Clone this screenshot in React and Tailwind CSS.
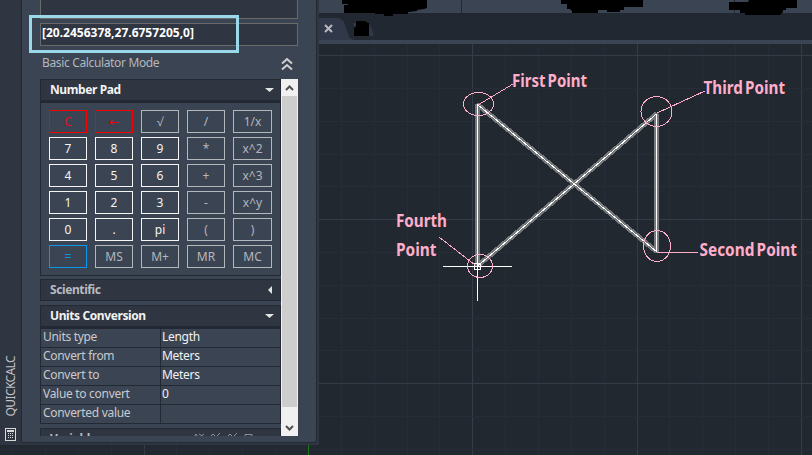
import React from "react";

const KEYS = [
  ["C", "←", "√", "/", "1/x"],
  ["7", "8", "9", "*", "x^2"],
  ["4", "5", "6", "+", "x^3"],
  ["1", "2", "3", "-", "x^y"],
  ["0", ".", "pi", "(", ")"],
  ["=", "MS", "M+", "MR", "MC"],
];

function tone(key) {
  if (key === "←") return "border-[#f60000] text-[#f60000] font-['DejaVu_Sans']";
  if (key === "C") return "border-[#f60000] text-[#e01020]";
  if (key === "=") return "border-[#0a96ea] text-[#0a96ea]";
  if (/^([0-9.]|pi)$/.test(key)) return "border-[#f5f5f5] text-[#f5f5f5]";
  return "border-[#b4b7bc] text-[#b4b7bc]";
}

const UNITS = [
  ["Units type", "Length"],
  ["Convert from", "Meters"],
  ["Convert to", "Meters"],
  ["Value to convert", "0"],
  ["Converted value", ""],
];

function Header({ title, open = true, className = "" }) {
  return (
    <div className={"flex shrink-0 items-center justify-between border border-[#222933] bg-[#2f3541] pl-[9px] pr-[6px] font-bold " + className}>
      <span className="tracking-[-0.4px]">{title}</span>
      <svg className="mb-px" width="9" height="9" viewBox="0 0 9 9" fill="#e4e4e4">
        {open ? <path d="M0 3h9L4.5 7z" /> : <path d="M7 1v8L3 5z" />}
      </svg>
    </div>
  );
}

function Palette() {
  return (
    <div className="flex h-[445px] w-[319px] shrink-0 bg-[#2f3541] pb-[3px] pr-[3px]">
      <div className="flex w-[22px] shrink-0 flex-col items-center justify-end border-r border-[#222933]">
        <span className="rotate-180 text-[12px] leading-[14px] tracking-[-0.6px] text-[#c0c2c6] [writing-mode:vertical-rl]">QUICKCALC</span>
        <svg className="mt-[12px]" width="11" height="13" viewBox="0 0 11 13">
          <rect x=".5" y=".5" width="10" height="12" fill="#2f3541" stroke="#d8d8d8" />
          <rect x="2" y="2" width="7" height="2" fill="#d8d8d8" />
          <g fill="#d8d8d8" shapeRendering="crispEdges">
            {[5, 7, 9].map((y) => [3, 5, 7].map((x) => <rect key={x + "-" + y} x={x} y={y} width="1" height="1" />))}
          </g>
        </svg>
        <div className="h-[1px]" />
      </div>
      <div className="flex w-[294px] flex-col rounded-br-[2px] bg-[#3b4453] pl-[18px] pr-[18px] outline outline-1 outline-[#222933]">
        <div className="h-[19px] shrink-0 border border-t-0 border-[#6a6a6a] bg-[#2f3541]" />
        <div className="mt-[4px] h-[23px] shrink-0 border border-[#6a6a6a] bg-[#2f3541] pl-[1px] text-[12px] font-bold leading-[18px] text-white">
          [20.2456378,27.6757205,0]
        </div>
        <div className="flex h-[33px] shrink-0 items-center justify-between pl-[2px] pr-[5px] text-[12px] text-[#b4b7bc]">
          <span className="tracking-[-0.35px]">Basic Calculator Mode</span>
          <svg className="mt-[3px]" width="12" height="14" viewBox="0 0 12 14" fill="none" stroke="#d0d0d0" strokeWidth="2">
            <path d="M1 6.5l5-4.5 5 4.5M1 12.5L6 8l5 4.5" />
          </svg>
        </div>
        <div className="flex h-[357px] overflow-hidden">
          <div className="flex w-[241px] shrink-0 flex-col text-[12px] text-[#f2f2f2]">
            <Header title="Number Pad" className="h-[22px]" />
            <div className="grid h-[175px] shrink-0 grid-cols-[38px_38px_38px_38px_39px] content-start gap-x-[8px] gap-y-[4px] border border-t-2 border-[#222933] pl-[8px] pt-[7px]">
              {KEYS.flat().map((k) => (
                <div key={k} className={"flex h-[23px] items-center justify-center border pt-px text-[12px] " + tone(k)}>
                  {k}
                </div>
              ))}
            </div>
            <Header title="Scientific" open={false} className="mt-[3px] h-[22px] text-[#b8bbc0]" />
            <Header title="Units Conversion" className="mt-[4px] h-[22px]" />
            <div className="h-[97px] shrink-0 border border-t-2 border-[#222933]">
              {UNITS.map(([a, b]) => (
                <div key={a} className="flex h-[19px] border-b border-[#222933] leading-[16px] tracking-[-0.3px] last:border-b-0">
                  <div className="w-[120px] border-r border-[#222933] pl-[2px] text-[#c8cacd]">{a}</div>
                  <div className="pl-[1px]">{b}</div>
                </div>
              ))}
            </div>
            <div className="mt-[4px] flex h-[22px] shrink-0 items-start border border-[#222933] bg-[#2f3541] pl-[9px] font-bold leading-[20px] text-[#b8bbc0]">
              <span className="w-[144px] tracking-[-0.3px]">Variables</span>
              <svg className="mt-[4px]" width="60" height="8" viewBox="0 0 60 8" fill="none" stroke="#8e9197">
                <path d="M0 4l2-3 2 3M5 1l5 3M10 1L6 4M17 3l2-2 2 2M22 4l4-4M34 3l2-2 2 2M39 4l4-4M51 1.5h7v4h-7z" />
              </svg>
            </div>
          </div>
          <div className="flex w-[17px] flex-col items-center justify-between bg-[#f0f0f0]">
            <svg width="17" height="17" viewBox="0 0 17 17" fill="none" stroke="#505050" strokeWidth="2">
              <path d="M5 11l3.5-3.5L12 11" />
            </svg>
            <div className="w-[15px] flex-1 bg-[#cdcdcd]" />
            <svg width="17" height="29" viewBox="0 0 17 29" fill="none" stroke="#505050" strokeWidth="2">
              <path d="M5 19l3.5 3.5L12 19" />
            </svg>
          </div>
        </div>
      </div>
    </div>
  );
}

function Grid() {
  const xs = [12, 45, 78, 111, 144, 176, 209, 242, 275, 341, 374, 407, 439, 472, 505, 538, 571, 604, 637, 669, 702, 735, 768, 801];
  const ys = [55, 88, 121, 154, 186, 219, 252, 285, 318, 350, 383, 416, 449];
  const major = [144, 472, 637, 801, 55, 219, 383];
  return (
    <svg className="absolute left-0 top-0" width="812" height="455">
      {xs.map((x) => <rect key={x} x={x} y="44" width="1" height="411" fill={major.includes(x) ? "#343b49" : "#262d39"} />)}
      {ys.map((y) => <rect key={y} x="0" y={y} width="812" height="1" fill={major.includes(y) ? "#343b49" : "#262d39"} />)}
      <rect x="308" y="445" width="1" height="10" fill="#1c7a1c" />
    </svg>
  );
}

function Label({ x, y, w, children }) {
  return (
    <text x={x} y={y} textLength={w} lengthAdjust="spacingAndGlyphs" wordSpacing="-2" fontSize="17" fontWeight="700" fill="#ffaec9">
      {children}
    </text>
  );
}

function Drawing() {
  const d = "M477.5 266V104.5L656.5 251.5V114L477.5 266";
  return (
    <svg className="absolute left-0 top-0" width="812" height="455" fill="none">
      <g shapeRendering="crispEdges">
        <path d={d} stroke="#75797c" strokeWidth="5" strokeLinejoin="bevel" />
        <path d={d} stroke="#fff" strokeLinejoin="bevel" />
        <path d="M443 266.5h69M477.5 232v69" stroke="#fff" />
        <rect x="474.5" y="263.5" width="6" height="6" stroke="#fff" />
      </g>
      <g stroke="#ffaec9" shapeRendering="crispEdges">
        <ellipse cx="478.5" cy="104" rx="15" ry="11.5" />
        <ellipse cx="656.5" cy="111.5" rx="15.5" ry="15" />
        <ellipse cx="657" cy="246" rx="13.5" ry="15.5" />
        <ellipse cx="480" cy="266" rx="12.5" ry="11.5" />
        <path d="M478 105l35-21M657 113l48-22M657 252.5h41M439 237l36 28" />
      </g>
      <Label x="512" y="87" w="75">First Point</Label>
      <Label x="703.5" y="94" w="81.5">Third Point</Label>
      <Label x="699.5" y="256" w="97.5">Second Point</Label>
      <Label x="396" y="227" w="51">Fourth</Label>
      <Label x="396" y="256" w="40.5">Point</Label>
    </svg>
  );
}

function Tabs() {
  return (
    <div className="flex h-[44px] flex-1 flex-col">
      <div className="flex h-[13px] bg-[#3b4453]">
        <div className="w-[143px] border-r border-[#222933]" />
        <div className="w-[273px] border-r border-[#222933]" />
      </div>
      <div className="flex h-[27px] items-end bg-[#222831]">
        <svg width="60" height="22" viewBox="0 0 60 22">
          <path d="M0 0H18Q24 0 26 7L29 16Q31 22 37 22H0z" fill="#31384a" />
          <path d="M34 5H47Q50 5 52 9L55 18H38z" fill="#31384a" />
          <path d="M6 7l7 7M13 7l-7 7" stroke="#b8babd" strokeWidth="2" />
          <path d="M37 3H46L49 5H50V18H35V10L37 8z" fill="#000" />
        </svg>
      </div>
      <div className="h-[4px] bg-[#3b4453]" />
    </div>
  );
}

export default function App() {
  return (
    <div className="relative flex h-[455px] w-[812px] items-start overflow-hidden bg-[#212830] font-['Noto_Sans','Open_Sans',sans-serif]">
      <Grid />
      <div className="relative flex w-full items-start">
        <Palette />
        <Tabs />
      </div>
      <Drawing />
      <svg className="absolute left-0 top-0" width="812" height="20" fill="#000">
        <path d="M342 0H427V8L424 9 417 10V11L408 12V14H393V16H384V14H375V13H344V5H348V4H342z" />
        <path d="M561 0H643V7H624V10H620V12H607V10H598V13H572V11L570 9H567V4H561z" />
        <path d="M749 0H797V8H786V10H783V12L780 15H745V13H740V10H729V2H748z" />
      </svg>
      <div className="absolute left-[29px] top-[15px] h-[38px] w-[210px] border-[3px] border-[#99d9ea]" />
    </div>
  );
}
